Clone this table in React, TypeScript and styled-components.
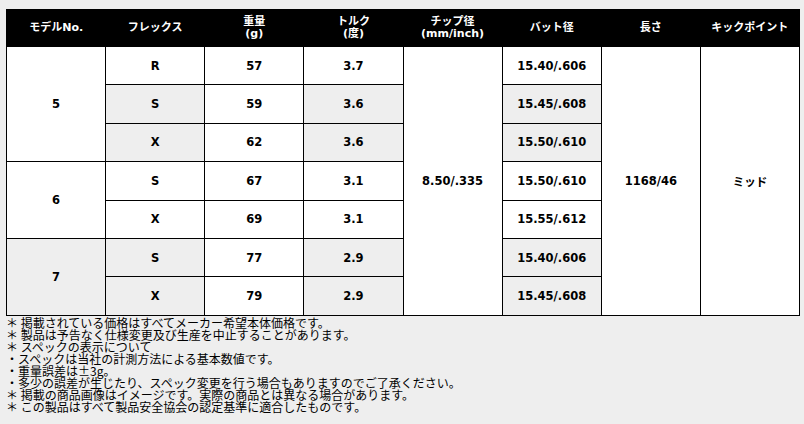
import React from "react";
import styled, { createGlobalStyle } from "styled-components";

type rowType = {
  model?: string;
  modelSpan?: number;
  modelShade?: boolean;
  flex: string;
  weight: string;
  torque: string;
  butt: string;
  shade: boolean;
};

const rows: rowType[] = [
  { model: "5", modelSpan: 3, flex: "R", weight: "57", torque: "3.7", butt: "15.40/.606", shade: false },
  { flex: "S", weight: "59", torque: "3.6", butt: "15.45/.608", shade: true },
  { flex: "X", weight: "62", torque: "3.6", butt: "15.50/.610", shade: true },
  { model: "6", modelSpan: 2, flex: "S", weight: "67", torque: "3.1", butt: "15.50/.610", shade: false },
  { flex: "X", weight: "69", torque: "3.1", butt: "15.55/.612", shade: false },
  { model: "7", modelSpan: 2, modelShade: true, flex: "S", weight: "77", torque: "2.9", butt: "15.40/.606", shade: true },
  { flex: "X", weight: "79", torque: "2.9", butt: "15.45/.608", shade: true },
];

const notes = [
  "＊ 掲載されている価格はすべてメーカー希望本体価格です。",
  "＊ 製品は予告なく仕様変更及び生産を中止することがあります。",
  "＊ スペックの表示について",
  "・スペックは当社の計測方法による基本数値です。",
  "・重量誤差は±3g。",
  "・多少の誤差が生じたり、スペック変更を行う場合もありますのでご了承ください。",
  "＊ 掲載の商品画像はイメージです。実際の商品とは異なる場合があります。",
  "＊ この製品はすべて製品安全協会の認定基準に適合したものです。",
];

const App: React.FC = () => {
  return (
    <>
      <GlobalStyle />
      <Page>
        <SpecTable>
          <thead>
            <tr>
              <Head>モデルNo.</Head>
              <Head>フレックス</Head>
              <Head>
                重量
                <br />
                (g)
              </Head>
              <Head>
                トルク
                <br />
                (度)
              </Head>
              <Head>
                チップ径
                <br />
                (mm/inch)
              </Head>
              <Head>バット径</Head>
              <Head>長さ</Head>
              <Head>キックポイント</Head>
            </tr>
          </thead>
          <tbody>
            {rows.map((row, i) => (
              <BodyRow key={i}>
                {row.model && (
                  <Cell rowSpan={row.modelSpan} $shade={!!row.modelShade}>
                    {row.model}
                  </Cell>
                )}
                <Cell $shade={row.shade}>{row.flex}</Cell>
                <Cell $shade={false}>{row.weight}</Cell>
                <Cell $shade={row.shade}>{row.torque}</Cell>
                {i === 0 && (
                  <Cell rowSpan={7} $shade={false}>
                    8.50/.335
                  </Cell>
                )}
                <Cell $shade={row.shade}>{row.butt}</Cell>
                {i === 0 && (
                  <>
                    <Cell rowSpan={7} $shade={false}>
                      1168/46
                    </Cell>
                    <Cell rowSpan={7} $shade={false}>
                      ミッド
                    </Cell>
                  </>
                )}
              </BodyRow>
            ))}
          </tbody>
        </SpecTable>
        <Notes>
          {notes.map((n, i) => (
            <Note key={i}>{n}</Note>
          ))}
        </Notes>
      </Page>
    </>
  );
};

export default App;

const GlobalStyle = createGlobalStyle`
  html, body {
    margin: 0;
    padding: 0;
    background: #eeeeee;
  }
  body {
    font-family: "DejaVu Sans", "Noto Sans CJK JP", sans-serif;
    color: #000;
  }
`;

const Page = styled.div`
  width: 804px;
  height: 424px;
  box-sizing: border-box;
  padding: 9px 4px 0 6px;
  background: #eeeeee;
  overflow: hidden;
`;

const SpecTable = styled.table`
  width: 794px;
  table-layout: fixed;
  border-collapse: collapse;
  border: 1.5px solid #000;
`;

const Head = styled.th`
  height: 36px;
  padding: 0;
  background: #000;
  color: #fff;
  font-size: 11px;
  font-weight: 700;
  line-height: 12px;
  text-align: center;
  vertical-align: middle;
`;

const BodyRow = styled.tr`
  height: 38.4px;
`;

const Cell = styled.td<{ $shade: boolean }>`
  padding: 0;
  border: 1.5px solid #000;
  background: ${(p) => (p.$shade ? "#eeeeee" : "#ffffff")};
  font-size: 11.5px;
  font-weight: 700;
  text-align: center;
  vertical-align: middle;
`;

const Notes = styled.div`
  display: flex;
  flex-direction: column;
  margin-top: 1px;
`;

const Note = styled.div`
  font-family: "Noto Sans CJK JP", sans-serif;
  font-size: 12px;
  line-height: 12px;
  white-space: nowrap;
`;
